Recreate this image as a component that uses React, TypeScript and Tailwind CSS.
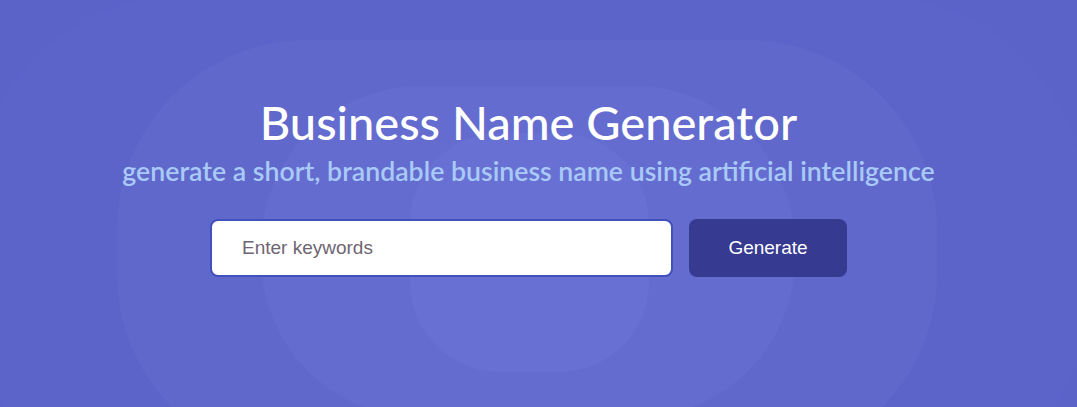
import { useState } from 'react'

export default function App() {
  const [keywords, setKeywords] = useState('')

  return (
    <div className="relative w-full h-[407px] overflow-hidden bg-[#5b62c8]">
      {/* background rings */}
      <div className="absolute left-[-30px] top-[-6px] w-[1117px] h-[516px] rounded-[220px] bg-[#5d64c9]" />
      <div className="absolute left-[117px] top-[40px] w-[820px] h-[424px] rounded-[190px] bg-[#6068cb]" />
      <div className="absolute left-[261px] top-[86px] w-[534px] h-[332px] rounded-[160px] bg-[#646ccf]" />
      <div className="absolute left-[410px] top-[133px] w-[239px] h-[239px] rounded-[90px] bg-[#6871d3]" />

      {/* content */}
      <div className="relative flex flex-col items-center pt-[93px] pr-[20px]">
        <h1 className="font-['Lato',sans-serif] font-medium text-[47px] leading-[58px] text-white">
          Business Name Generator
        </h1>
        <p className="mt-[4px] font-['Lato',sans-serif] font-semibold text-[26.7px] leading-[32px] text-[#a9caf6]">
          generate a short, brandable business name using artificial intelligence
        </p>

        <div className="mt-[32px] flex gap-4">
          <input
            value={keywords}
            onChange={e => setKeywords(e.target.value)}
            placeholder="Enter keywords"
            className="w-[463px] h-[58px] px-[30px] rounded-lg bg-white border-2 border-[#4050bc] font-['Liberation_Sans',sans-serif] text-[19px] text-gray-800 placeholder:text-[#6e6672] outline-none"
          />
          <button className="w-[158px] h-[58px] rounded-lg bg-[#363a90] font-['Liberation_Sans',sans-serif] text-[19px] text-white">
            Generate
          </button>
        </div>
      </div>
    </div>
  )
}
